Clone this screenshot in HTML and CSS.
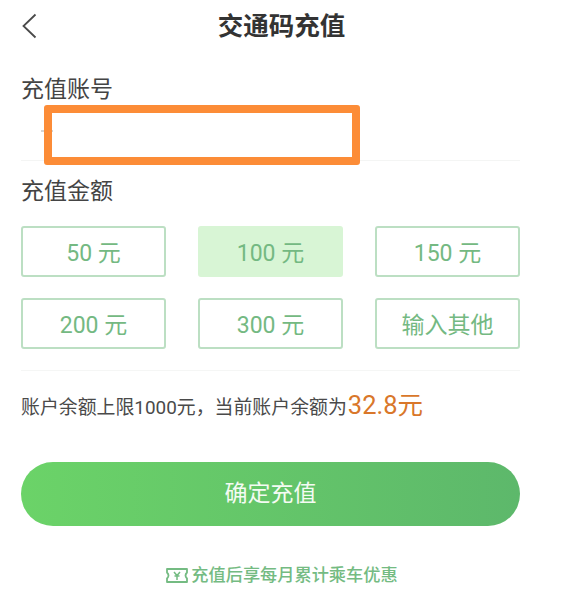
FILE: index.html
```html
<!DOCTYPE html>
<html>
<head>
  <meta charset="utf-8">
  <title>交通码充值</title>
  <meta name="viewport" content="width=device-width, initial-scale=1">
  <link rel="stylesheet" href="styles.css">
</head>
<body>
  <div class="page">
    <div class="top-bar">
      <svg class="back" width="16" height="26" viewBox="0 0 16 26"><path d="M14.5 1.5 L2.5 13 L14.5 24.5" fill="none" stroke="#4a4a4a" stroke-width="1.8"/></svg>
      <div class="title">交通码充值</div>
    </div>

    <div class="account">
      <div class="label">充值账号</div>
      <div class="account-row">
        <span class="account-mark"></span>
        <div class="mask"></div>
      </div>
    </div>

    <div class="amount">
      <div class="label">充值金额</div>
      <div class="amount-grid">
        <div class="amount-btn">50 元</div>
        <div class="amount-btn active">100 元</div>
        <div class="amount-btn">150 元</div>
        <div class="amount-btn">200 元</div>
        <div class="amount-btn">300 元</div>
        <div class="amount-btn">输入其他</div>
      </div>
    </div>

    <div class="balance">账户余额上限1000元，当前账户余额为<span class="balance-num">32.8元</span></div>

    <div class="confirm">确定充值</div>

    <div class="promo">
      <svg class="ticket" width="22" height="15" viewBox="0 0 22 15">
        <path d="M1 1 H21 V4.5 Q18 7.5 21 10.5 V14 H1 V10.5 Q4 7.5 1 4.5 Z" fill="none" stroke="#74bb82" stroke-width="1.8" stroke-linejoin="round"/>
        <path d="M8 4 L11 7.5 L14 4 M8.5 8 H13.5 M11 7.5 V12" fill="none" stroke="#74bb82" stroke-width="1.5"/>
      </svg>
      <span>充值后享每月累计乘车优惠</span>
    </div>
  </div>
</body>
</html>
```

FILE: styles.css
```css
body {
  margin: 0;
  background: #fff;
  font-family: Roboto, "Noto Sans CJK SC", sans-serif;
  color: #3f3f3f;
}

.page {
  width: 565px;
  height: 600px;
  padding: 0 45px 0 21px;
  box-sizing: border-box;
  overflow: hidden;
}

.top-bar {
  display: grid;
  grid-template-columns: 1fr auto 1fr;
  align-items: center;
  height: 52px;
  padding-left: 22px;
}

.back {
  margin-left: -22px;
}

.title {
  font-size: 25.5px;
  font-weight: 700;
  line-height: 52px;
  color: #333;
}

.label {
  font-size: 23px;
  line-height: 32px;
  color: #444;
}

.account {
  padding-top: 22px;
  height: 86px;
  border-bottom: 1px solid #f4f5f4;
}

.account-row {
  position: relative;
  height: 54px;
}

.account-mark {
  position: absolute;
  left: 20px;
  top: 24px;
  width: 12px;
  height: 2px;
  background: #d5d5d5;
}

.mask {
  position: absolute;
  left: 23px;
  top: -1px;
  width: 316px;
  height: 60px;
  box-sizing: border-box;
  border: 8px solid #fc8c37;
  border-radius: 3px;
}

.amount {
  padding-top: 15px;
  height: 210px;
  box-sizing: border-box;
  border-bottom: 1px solid #f5f6f5;
}

.amount-grid {
  display: grid;
  grid-template-columns: repeat(3, 145px);
  grid-auto-rows: 51px;
  column-gap: 32px;
  row-gap: 21px;
  margin-top: 18px;
}

.amount-btn {
  display: flex;
  align-items: center;
  justify-content: center;
  box-sizing: border-box;
  padding-bottom: 2px;
  border: 2px solid #bcdfc3;
  border-radius: 3px;
  font-size: 23px;
  color: #74b982;
}

.amount-btn.active {
  background: #d8f5d5;
  border-color: #d8f5d5;
}

.balance {
  display: flex;
  align-items: baseline;
  margin-top: 18px;
  height: 32px;
  font-size: 18.9px;
  line-height: 32px;
  color: #4a4a4a;
}

.balance-num {
  margin-left: 1px;
  font-size: 25.5px;
  color: #d9772a;
}

.confirm {
  margin-top: 41px;
  height: 64px;
  border-radius: 32px;
  background: linear-gradient(90deg, #6bd368, #5db86b);
  color: #f4fbf3;
  font-size: 23px;
  line-height: 64px;
  text-align: center;
}

.promo {
  display: flex;
  align-items: center;
  justify-content: center;
  gap: 3px;
  margin-top: 36px;
  padding-left: 23px;
  font-size: 17.2px;
  font-weight: 500;
  line-height: 26px;
  color: #74bb82;
}
```
